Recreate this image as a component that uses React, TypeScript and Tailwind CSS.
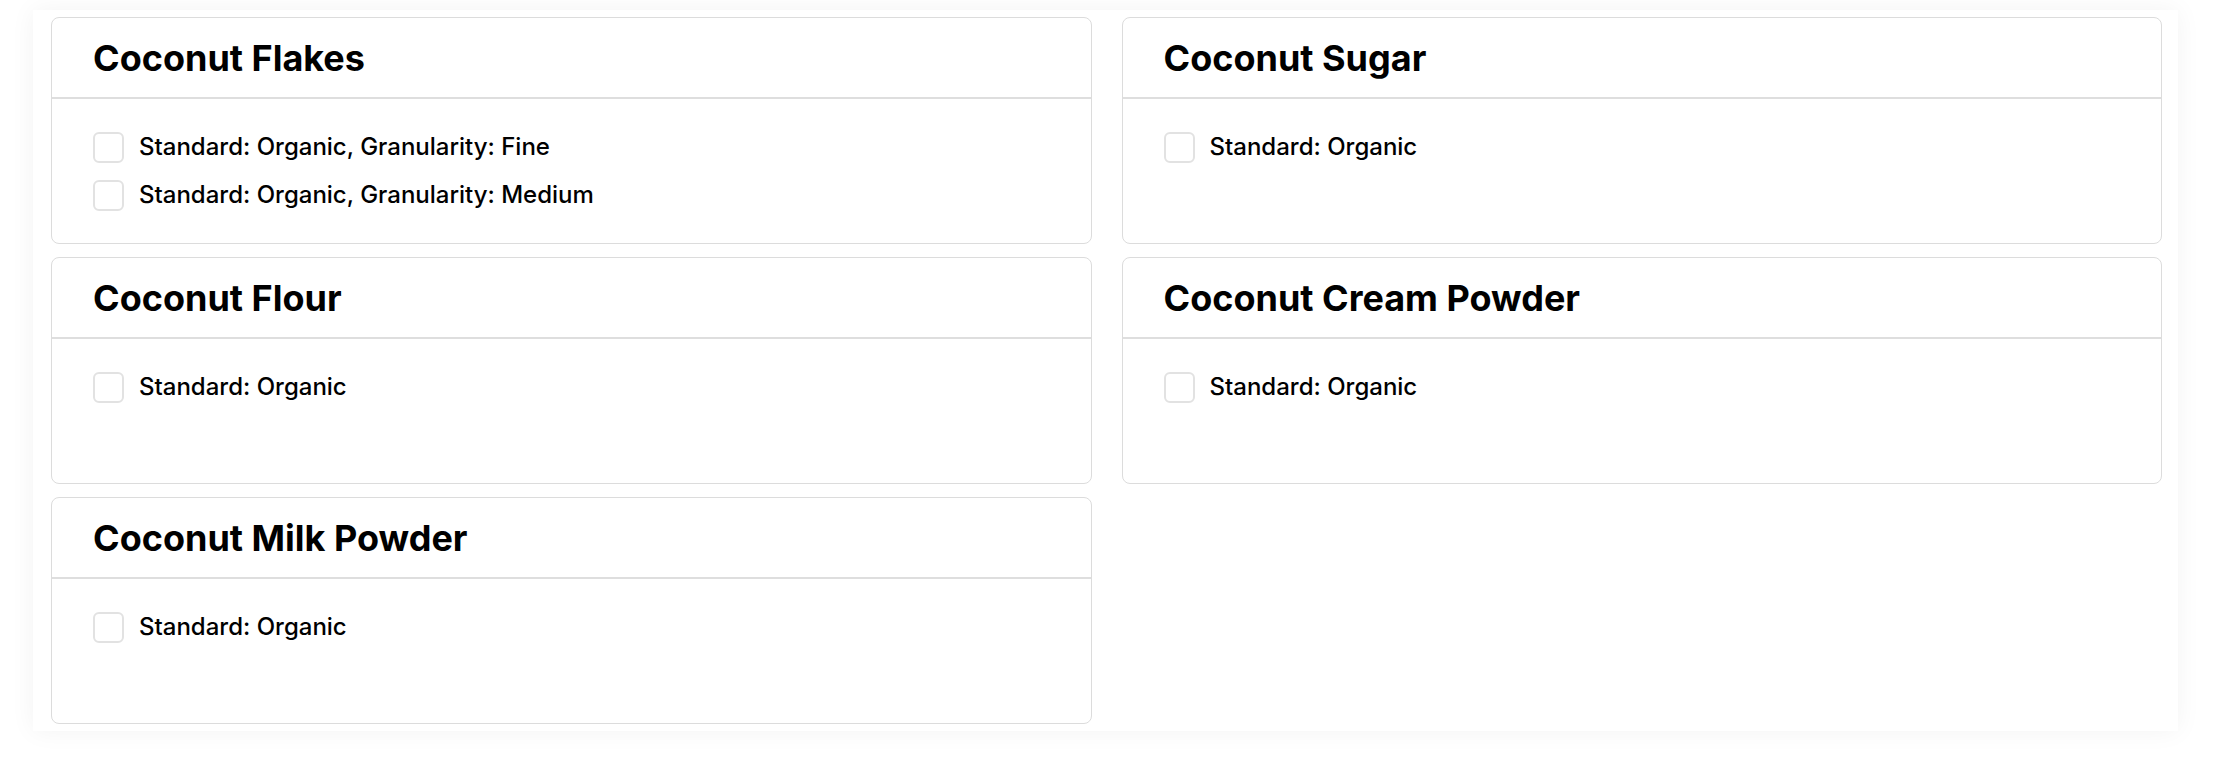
import React from "react";

type Product = { name: string; options: string[] };

const products: Product[] = [
  { name: "Coconut Flakes", options: ["Standard: Organic, Granularity: Fine", "Standard: Organic, Granularity: Medium"] },
  { name: "Coconut Sugar", options: ["Standard: Organic"] },
  { name: "Coconut Flour", options: ["Standard: Organic"] },
  { name: "Coconut Cream Powder", options: ["Standard: Organic"] },
  { name: "Coconut Milk Powder", options: ["Standard: Organic"] },
];

function Card({ p }: { p: Product }) {
  return (
    <div className="flex flex-col rounded-[8px] border border-[#dcdcdc] bg-white">
      <div className="border-b-2 border-[#dedede] px-[41px] pt-[20px] pb-[19px]">
        <h2 className="text-[36px] font-bold leading-[40px] text-black">{p.name}</h2>
      </div>
      <div className="flex flex-col gap-[12px] px-[41px] pt-[30px] pb-[30px]">
        {p.options.map((o) => (
          <label key={o} className="flex h-[36px] items-center gap-[15px]">
            <span className="h-[31px] w-[31px] shrink-0 rounded-[6px] border-2 border-[#e2e2e2] bg-white" />
            <span className="text-[24px] font-medium leading-[36px] text-black">{o}</span>
          </label>
        ))}
      </div>
    </div>
  );
}

export default function App() {
  return (
    <div className="min-h-[758px] bg-white pt-[10px]" style={{ fontFamily: "Inter, 'Noto Sans', sans-serif" }}>
      <div className="ml-[33px] mr-[36px] bg-white pl-[18px] pr-[16px] pt-[7px] pb-[7px] shadow-[0_0_24px_rgba(0,0,0,0.05)]">
        <div className="grid grid-cols-2 auto-rows-fr gap-x-[30px] gap-y-[13px]">
          {products.map((p) => (
            <Card key={p.name} p={p} />
          ))}
        </div>
      </div>
    </div>
  );
}
